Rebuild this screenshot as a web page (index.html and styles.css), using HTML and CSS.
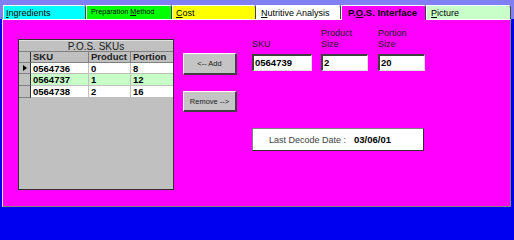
FILE: index.html
```html
<!DOCTYPE html>
<html>
<head>
<meta charset="utf-8">
<link rel="stylesheet" href="styles.css">
</head>
<body>
<div class="window">
  <div class="tabs">
    <div class="tab tab-ing"><u>I</u>ngredients</div>
    <div class="tab tab-prep">Preparation <u>M</u>ethod</div>
    <div class="tab tab-cost"><u>C</u>ost</div>
    <div class="tab tab-nut"><u>N</u>utritive Analysis</div>
    <div class="tab tab-pos">P.<u>O</u>.S. Interface</div>
    <div class="tab tab-pic"><u>P</u>icture</div>
  </div>
  <div class="panel">
    <div class="grid">
      <div class="grid-title">P.O.S. SKUs</div>
      <div class="grid-body">
        <div class="cell ind hdr"></div>
        <div class="cell hdr">SKU</div>
        <div class="cell hdr">Product</div>
        <div class="cell hdr last">Portion</div>

        <div class="cell ind"><span class="arrow"></span></div>
        <div class="cell data">0564736</div>
        <div class="cell data">0</div>
        <div class="cell data last">8</div>

        <div class="cell ind"></div>
        <div class="cell data alt">0564737</div>
        <div class="cell data alt">1</div>
        <div class="cell data alt last">12</div>

        <div class="cell ind"></div>
        <div class="cell data">0564738</div>
        <div class="cell data">2</div>
        <div class="cell data last">16</div>
      </div>
    </div>
    <div class="buttons">
      <div class="btn">&lt;-- Add</div>
      <div class="btn btn-remove">Remove --&gt;</div>
    </div>
    <div class="fields">
      <div class="field-row">
        <div class="field f-sku">
          <div class="label">SKU</div>
          <div class="input">0564739</div>
        </div>
        <div class="field f-size">
          <div class="label">Product<br>Size</div>
          <div class="input">2</div>
        </div>
        <div class="field f-size">
          <div class="label">Portion<br>Size</div>
          <div class="input">20</div>
        </div>
      </div>
      <div class="date-box">
        <span class="date-label">Last Decode Date :</span>
        <span class="date-value">03/06/01</span>
      </div>
    </div>
  </div>
</div>
</body>
</html>
```
FILE: styles.css
```css
* { box-sizing: border-box; }
html, body { margin: 0; padding: 0; background: #0000f0; }
body {
  font-family: "Liberation Sans", Arial, sans-serif;
  font-size: 9px;
  color: #000;
}
.window {
  width: 514px;
  height: 211px;
  background: #0000f0;
  overflow: hidden;
}
.tabs {
  display: flex;
  height: 19px;
  padding: 5px 0 0 3px;
  background: #8080f4;
  align-items: flex-start;
}
.tab {
  height: 14px;
  border-top: 1px solid #ffffff;
  border-left: 1px solid #ffffff;
  border-right: 1px solid #404040;
  border-top-right-radius: 3px;
  line-height: 14px;
  white-space: nowrap;
  color: #000;
  font-size: 9px;
}
.tab-ing { width: 83px; background: #00ffff; padding-left: 2px; }
.tab-prep { width: 86px; background: #00ff00; font-size: 7.2px; padding-left: 4px; line-height: 12px; }
.tab-cost { width: 84px; background: #ffff00; padding-left: 3px; }
.tab-nut { width: 85px; background: #ffffff; padding-left: 4px; }
.tab-pos {
  width: 85px;
  height: 15px;
  background: #ff00ff;
  font-weight: bold;
  font-size: 9.5px;
  padding-left: 6px;
  position: relative;
  z-index: 1;
}
.tab-pic { width: 85px; background: #c8ffc8; padding-left: 4px; }

.panel {
  margin: 0 3px 0 2px;
  height: 188px;
  background: #ff00ff;
  border-top: 1px solid #ffffff;
  border-left: 1px solid #e8e8e8;
  border-right: 1px solid #808080;
  border-bottom: 1px solid #808080;
  display: flex;
  align-items: flex-start;
  padding: 6px 0 0 15px;
}

.grid {
  margin-top: 13px;
  width: 156px;
  height: 151px;
  border: 1px solid #303030;
  background: #c0c0c0;
  background-image: radial-gradient(#b4b4b4 0.5px, transparent 0.6px);
  background-size: 2px 2px;
}
.grid-title {
  height: 12px;
  line-height: 11px;
  text-align: center;
  color: #202020;
  font-size: 10px;
  border-bottom: 1px solid #808080;
  border-top: 1px solid #e0e0e0;
}
.grid-body {
  display: grid;
  grid-template-columns: 12px 58px 42px 42px;
  grid-auto-rows: 11px 11px 12px 12px;
}
.cell {
  border-right: 1px solid #808080;
  border-bottom: 1px solid #808080;
  padding-left: 2px;
  line-height: 11px;
  white-space: nowrap;
  overflow: hidden;
  font-size: 9.5px;
}
.cell.last { border-right: none; }
.hdr {
  background: #c0c0c0;
  font-weight: bold;
  color: #202020;
  line-height: 10px;
  font-size: 9.5px;
}
.ind {
  background: #c0c0c0;
  border-right: 1px solid #303030;
  padding-left: 4px;
  display: flex;
  align-items: center;
}
.arrow {
  width: 0;
  height: 0;
  border-top: 3px solid transparent;
  border-bottom: 3px solid transparent;
  border-left: 4px solid #000;
}
.data {
  background: #ffffff;
  font-weight: bold;
  border-bottom-color: #c0c0c0;
  border-right-color: #c0c0c0;
}
.data.alt { background: #c8ffc8; }

.buttons {
  margin: 27px 0 0 9px;
  display: flex;
  flex-direction: column;
  gap: 16px;
}
.btn {
  width: 54px;
  height: 22px;
  background: #c4c4c4;
  border-top: 1px solid #ffffff;
  border-left: 1px solid #ffffff;
  border-right: 2px solid #404040;
  border-bottom: 2px solid #404040;
  display: flex;
  align-items: center;
  justify-content: center;
  color: #202020;
  font-size: 7.5px;
}
.btn-remove { height: 21px; }

.fields {
  margin-left: 15px;
  display: flex;
  flex-direction: column;
}
.field-row {
  display: flex;
  gap: 9px;
}
.field {
  display: flex;
  flex-direction: column;
}
.label {
  height: 24px;
  line-height: 11px;
  color: #202020;
  margin-bottom: 4px;
  padding-top: 2px;
}
.f-sku .label { padding-top: 13px; }
.input {
  height: 17px;
  background: #ffffff;
  border-top: 2px solid #404040;
  border-left: 2px solid #404040;
  border-right: 1px solid #e0e0e0;
  border-bottom: 1px solid #e0e0e0;
  font-weight: bold;
  font-size: 9.5px;
  line-height: 14px;
  padding-left: 1px;
}
.f-sku .input { width: 60px; }
.f-size .input { width: 47px; }
.f-size + .f-size { margin-left: 1px; }

.date-box {
  margin-top: 57px;
  width: 172px;
  height: 23px;
  background: #ffffff;
  border-top: 1px solid #808080;
  border-left: 1px solid #808080;
  border-right: 1px solid #303030;
  border-bottom: 1px solid #303030;
  display: flex;
  align-items: center;
  padding-left: 16px;
}
.date-label { color: #404040; width: 85px; white-space: nowrap; }
.date-value { font-weight: bold; font-size: 9.5px; }
```
